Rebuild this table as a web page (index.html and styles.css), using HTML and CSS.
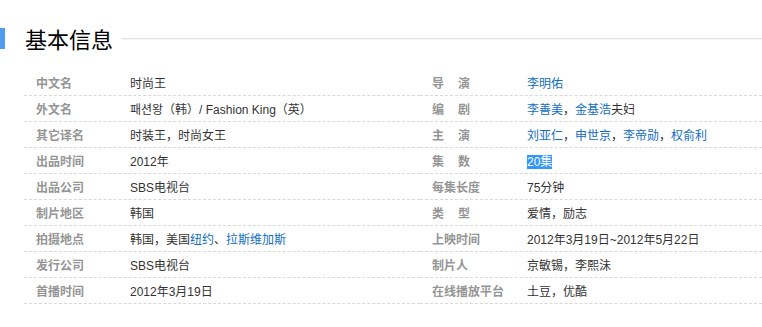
FILE: index.html
```html
<!DOCTYPE html>
<html lang="zh-CN">
<head>
<meta charset="utf-8">
<title>基本信息</title>
<link rel="stylesheet" href="styles.css">
</head>
<body>
<div class="para-title">
  <span class="title-mark"></span>
  <h2 class="title-text">基本信息</h2>
  <span class="title-line"></span>
</div>
<div class="basic-info">
  <dl class="item"><dt class="name">中文名</dt><dd class="value">时尚王</dd></dl>
  <dl class="item"><dt class="name spaced">导演</dt><dd class="value"><a class="link">李明佑</a></dd></dl>
  <dl class="item"><dt class="name">外文名</dt><dd class="value">패션왕（韩）/ Fashion King（英）</dd></dl>
  <dl class="item"><dt class="name spaced">编剧</dt><dd class="value"><a class="link">李善美</a>，<a class="link">金基浩</a>夫妇</dd></dl>
  <dl class="item"><dt class="name">其它译名</dt><dd class="value">时装王，时尚女王</dd></dl>
  <dl class="item"><dt class="name spaced">主演</dt><dd class="value"><a class="link">刘亚仁</a>，<a class="link">申世京</a>，<a class="link">李帝勋</a>，<a class="link">权俞利</a></dd></dl>
  <dl class="item"><dt class="name">出品时间</dt><dd class="value">2012年</dd></dl>
  <dl class="item"><dt class="name spaced">集数</dt><dd class="value"><span class="selected">20集</span></dd></dl>
  <dl class="item"><dt class="name">出品公司</dt><dd class="value">SBS电视台</dd></dl>
  <dl class="item"><dt class="name">每集长度</dt><dd class="value">75分钟</dd></dl>
  <dl class="item"><dt class="name">制片地区</dt><dd class="value">韩国</dd></dl>
  <dl class="item"><dt class="name spaced">类型</dt><dd class="value">爱情，励志</dd></dl>
  <dl class="item"><dt class="name">拍摄地点</dt><dd class="value">韩国，美国<a class="link">纽约</a>、<a class="link">拉斯维加斯</a></dd></dl>
  <dl class="item"><dt class="name">上映时间</dt><dd class="value">2012年3月19日~2012年5月22日</dd></dl>
  <dl class="item"><dt class="name">发行公司</dt><dd class="value">SBS电视台</dd></dl>
  <dl class="item"><dt class="name">制片人</dt><dd class="value">京敏锡，李熙沬</dd></dl>
  <dl class="item"><dt class="name">首播时间</dt><dd class="value">2012年3月19日</dd></dl>
  <dl class="item"><dt class="name">在线播放平台</dt><dd class="value">土豆，优酷</dd></dl>
</div>
</body>
</html>
```

FILE: styles.css
```css
html, body {
  margin: 0;
  padding: 0;
  background: #fff;
}
body {
  font-family: "Liberation Sans", "Noto Sans CJK SC", sans-serif;
  font-size: 12px;
  color: #333;
}
.para-title {
  display: flex;
  align-items: center;
  height: 21px;
  margin-top: 28px;
}
.title-mark {
  width: 5px;
  height: 21px;
  background: #4f9cee;
  flex: none;
}
.title-text {
  margin: 0 0 0 20px;
  font-size: 22px;
  font-weight: normal;
  color: #000;
  line-height: 21px;
  font-family: "Noto Sans CJK SC", sans-serif;
  flex: none;
}
.title-line {
  flex: 1;
  height: 1px;
  margin-left: 8px;
  background: #e2e2e2;
  border-bottom: 1px solid #f6f6f6;
}
.basic-info {
  display: grid;
  grid-template-columns: 396px 1fr;
  margin: 21px 0 0 24px;
}
.item {
  display: flex;
  align-items: baseline;
  margin: 0;
  height: 25px;
  line-height: 25px;
  border-bottom: 1px dashed #d8d8d8;
  white-space: nowrap;
  overflow: hidden;
}
.name {
  width: 94px;
  padding-left: 12px;
  flex: none;
  color: #959595;
  font-weight: bold;
  font-family: "Noto Sans CJK SC", sans-serif;
}
.item:nth-child(even) .name {
  width: 95px;
}
.name.spaced {
  letter-spacing: 14px;
}
.value {
  margin: 0;
  color: #333;
}
.link {
  color: #136ec2;
  text-decoration: none;
}
.selected {
  background: #3297fd;
  color: #fff;
}
```
